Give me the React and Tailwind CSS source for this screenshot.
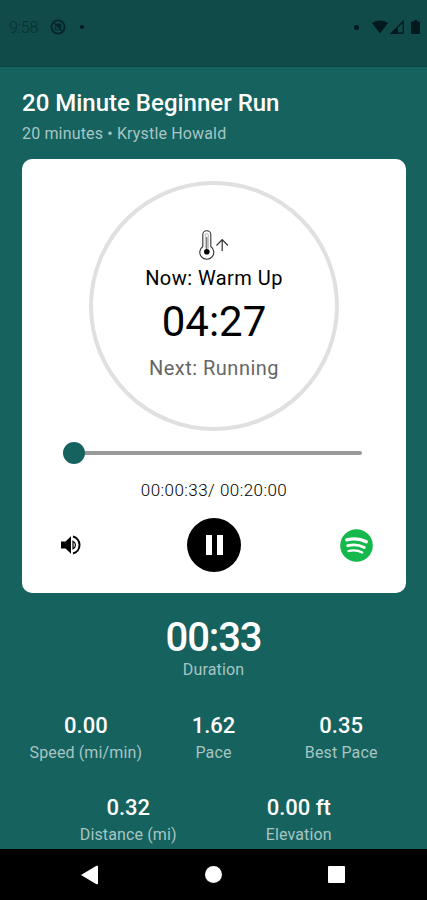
const topStats = [
  { value: '0.00', label: 'Speed (mi/min)' },
  { value: '1.62', label: 'Pace' },
  { value: '0.35', label: 'Best Pace' },
];

const bottomStats = [
  { value: '0.32', label: 'Distance (mi)' },
  { value: '0.00 ft', label: 'Elevation' },
];

const StatusBar = () => (
  <header className="flex h-[67px] items-start justify-between border-b border-[#0e4444] bg-[#104b4a] pl-[9px] pr-[7px] text-[#072f31]">
    <div className="flex h-[54px] items-center">
      <span className="w-[30px] whitespace-nowrap pt-[2px] text-[16px] font-light tracking-[-0.2px]">9:58</span>
      <svg className="ml-[11px] h-4 w-4" viewBox="0 0 16 16" fill="none" stroke="#042428">
        <circle cx="8" cy="8" r="6.6" strokeWidth="1.8" />
        <path d="M5.200 7v3.800h4" strokeWidth="1" />
        <path d="M6.500 5h4.300v4.300z" fill="#042428" strokeWidth="1" />
        <path d="M3.500 3.500l9 9" strokeWidth="1.300" />
      </svg>
      <span className="ml-[14px] h-1 w-1 rounded-full bg-[#03191d]" />
    </div>
    <div className="flex h-[54px] items-center text-[#03191d]">
      <span className="mr-[13px] h-[5px] w-[5px] rounded-full bg-current" />
      <svg className="h-[14px] w-4" viewBox="0 0 16 14" fill="currentColor">
        <path d="M0 3C4.500-.4 11.500-.4 16 3L8 13.500z" />
      </svg>
      <svg className="ml-[2px] h-[14px] w-[14px]" viewBox="0 0 14 14">
        <path d="M1.500 13.200L13.200 1.500v11.700z" fill="none" stroke="currentColor" strokeWidth="1.300" />
        <path d="M0 14L8 6v8z" fill="currentColor" />
      </svg>
      <svg className="ml-[7px] h-[14px] w-[9px]" viewBox="0 0 9 14" fill="currentColor">
        <path d="M3 0h3v1.500h2a1 1 0 0 1 1 1V13a1 1 0 0 1-1 1H1a1 1 0 0 1-1-1V2.500a1 1 0 0 1 1-1h2z" />
      </svg>
    </div>
  </header>
);

const ThermometerIcon = () => (
  <svg className="h-[30px] w-[30px]" viewBox="0 0 30 30" fill="none" stroke="#333">
    <path d="M3.800 16.500V4.700a4 4 0 0 1 8 0v11.800a7 7 0 1 1-8 0z" strokeWidth="1.100" />
    <path d="M6.300 18.500V5a1.500 1.500 0 0 1 3 0v13.500" stroke="#999" strokeWidth="0.700" />
    <path d="M7.800 7v15" strokeWidth="0.900" />
    <circle cx="7.800" cy="21.700" r="2.800" fill="#000" stroke="none" />
    <path d="M23.200 21V10M17.500 15.500l5.700-5.800 5.700 5.800" strokeWidth="1.200" />
  </svg>
);

const VolumeIcon = () => (
  <svg className="h-[26px] w-[26px]" viewBox="0 0 26 26" fill="none" stroke="#000">
    <path d="M3 9.500h4.500L13 4.300v17.400l-5.500-5.200H3z" fill="#000" stroke="none" />
    <path d="M15 9.200a4.200 4.200 0 0 1 0 7.600z" strokeWidth="1.200" />
    <path d="M15 4.500a8.800 8.800 0 0 1 0 17" strokeWidth="2" />
  </svg>
);

const SpotifyIcon = () => (
  <svg className="h-[33px] w-[33px]" viewBox="0 0 33 33" fill="none" stroke="#fff" strokeLinecap="round">
    <circle cx="16.500" cy="16.500" r="16.300" fill="#14b84b" stroke="none" />
    <path d="M6.800 10.900c6.600-1.700 13.600-1.200 19.500 1.900" strokeWidth="3.300" />
    <path d="M7.700 16.700c5.700-1.500 11.600-.9 16.600 1.800" strokeWidth="2.800" />
    <path d="M8.500 22c4.800-1.200 9.500-.7 13.700 1.500" strokeWidth="2.300" />
  </svg>
);

const Stat = ({ value, label }) => (
  <div className="flex flex-1 flex-col items-center whitespace-nowrap">
    <span className="text-[22px] font-medium leading-[28px] text-white">{value}</span>
    <span className="text-[16px] leading-[26px] tracking-[0.13px] text-[#a7c5c3]">{label}</span>
  </div>
);

const App = () => {
  return (
    <div className="flex h-[900px] w-[427px] flex-col overflow-hidden bg-[#15625e] font-['Roboto','Liberation_Sans',sans-serif]">
      <StatusBar />

      <main className="flex flex-1 flex-col px-[22px]">
        <h1 className="mt-[20px] whitespace-nowrap text-[24px] font-medium leading-[32px] text-white">20 Minute Beginner Run</h1>
        <p className="mt-[4px] whitespace-nowrap text-[16px] leading-[22px] tracking-[0.16px] text-[#a7c5c3]">20 minutes • Krystle Howald</p>

        {/* Workout player */}
        <section className="mt-[14px] flex h-[434px] w-[384px] flex-col items-center rounded-[10px] bg-white pt-[22px] text-black">
          <div className="flex h-[250px] w-[250px] shrink-0 flex-col items-center rounded-full border-4 border-[#e0e0e0] pt-[45px]">
            <ThermometerIcon />
            <p className="mt-[5px] text-[20px] leading-[26px] tracking-[0.45px]">Now: Warm Up</p>
            <p className="mt-[6px] text-[42px] leading-[50px]">04:27</p>
            <p className="mt-[8px] text-[20px] leading-[26px] tracking-[0.5px] text-[#666]">Next: Running</p>
          </div>

          <div className="mr-[4px] mt-[11px] flex h-[22px] w-[299px] items-center">
            <span className="h-[22px] w-[22px] rounded-full bg-[#15625e]" />
            <span className="h-1 flex-1 rounded-r-full bg-[#999]" />
          </div>

          <p className="mt-[15px] text-[17px] font-light leading-[22px] tracking-[0.45px]">00:00:33/ 00:20:00</p>

          <div className="mt-[17px] flex w-full items-center justify-between pl-[36px] pr-[33px]">
            <div className="flex w-[30px] justify-start">
              <VolumeIcon />
            </div>
            <button className="flex h-[54px] w-[54px] items-center justify-center gap-[5px] rounded-full bg-black" aria-label="Pause">
              <span className="h-5 w-[6px] bg-white" />
              <span className="h-5 w-[6px] bg-white" />
            </button>
            <SpotifyIcon />
          </div>
        </section>

        {/* Run stats */}
        <section className="mt-[21px] flex flex-col items-center">
          <span className="text-[40px] font-medium leading-[48px] tracking-[-1.1px] text-white">00:33</span>
          <span className="text-[16px] leading-[16px] tracking-[0.13px] text-[#a7c5c3]">Duration</span>
        </section>
        <section className="mt-[34px] flex">
          {topStats.map((stat) => (
            <Stat key={stat.label} {...stat} />
          ))}
        </section>
        <section className="mt-[28px] flex px-[21px]">
          {bottomStats.map((stat) => (
            <Stat key={stat.label} {...stat} />
          ))}
        </section>
      </main>

      <nav className="flex h-[51px] shrink-0 items-center justify-between bg-black pl-[81px] pr-[82px]">
        <svg className="h-5 w-[17px]" viewBox="0 0 17 20" fill="#fff">
          <path d="M0 10L15.500.8q1.500-.6 1.500 1v16.400q0 1.600-1.500 1z" />
        </svg>
        <span className="h-[17px] w-[17px] rounded-full bg-white" />
        <span className="h-[17px] w-[17px] rounded-[1px] bg-white" />
      </nav>
    </div>
  );
};

export default App;
